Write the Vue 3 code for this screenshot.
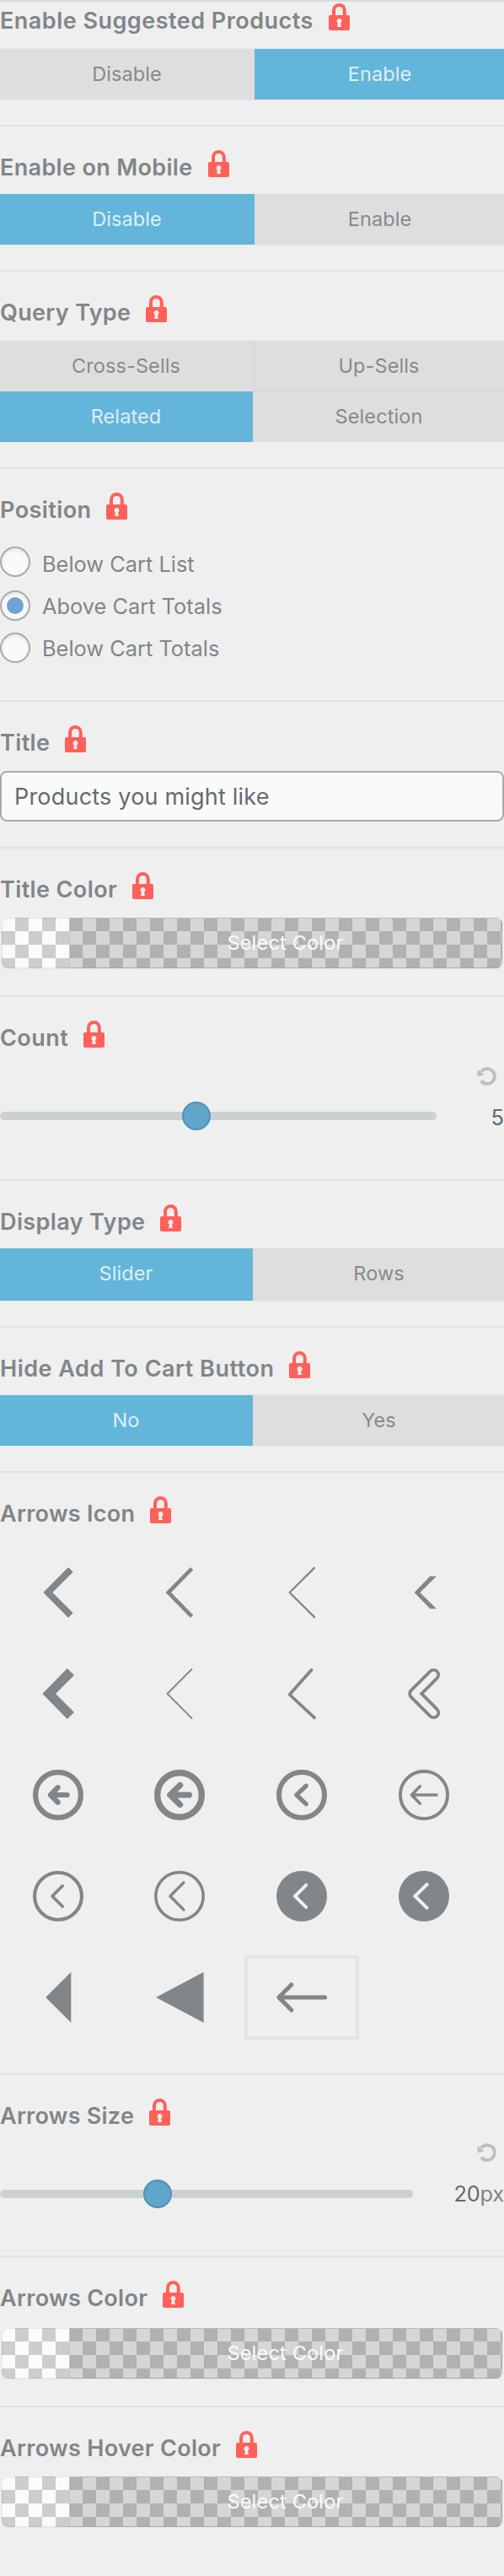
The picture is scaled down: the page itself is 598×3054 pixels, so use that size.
<script setup>
import { h } from 'vue'

const sections = [
  { title: 'Enable Suggested Products', track: 0.48, type: 'switch', cls: 'first', options: ['Disable', 'Enable'], active: 'Enable', cols: 'wide' },
  { title: 'Enable on Mobile', track: 0.34, type: 'switch', cls: '', options: ['Disable', 'Enable'], active: 'Disable', cols: 'wide' },
  { title: 'Query Type', track: 0.33, type: 'switch', cls: 'query', options: ['Cross-Sells', 'Up-Sells', 'Related', 'Selection'], active: 'Related', cols: 'even' },
  { title: 'Position', track: 0.42, type: 'radio', cls: 'position', options: ['Below Cart List', 'Above Cart Totals', 'Below Cart Totals'], active: 'Above Cart Totals' },
  { title: 'Title', track: 0.38, type: 'text', cls: 'input', value: 'Products you might like' },
  { title: 'Title Color', track: 0.38, type: 'color', cls: 'color' },
  { title: 'Count', track: 0.48, type: 'slider', cls: 'count', value: '5', unit: '', width: 518, pos: 216 },
  { title: 'Display Type', track: 0.38, type: 'switch', cls: 'display', options: ['Slider', 'Rows'], active: 'Slider', cols: 'even' },
  { title: 'Hide Add To Cart Button', track: 0.51, type: 'switch', cls: '', options: ['No', 'Yes'], active: 'No', cols: 'even' },
  { title: 'Arrows Icon', track: 0.28, type: 'icons', cls: 'icons' },
  { title: 'Arrows Size', track: 0.24, type: 'slider', cls: 'size', value: '20', unit: 'px', width: 490, pos: 170 },
  { title: 'Arrows Color', track: 0.3, type: 'color', cls: 'color lower' },
  { title: 'Arrows Hover Color', track: 0.31, type: 'color', cls: 'color' },
]

const INK = '#80868a'
const PAPER = '#efefef'
const fill = (points) => ({ tag: 'polygon', points, fill: INK })
const line = (d, w, cap = 'round', join = 'round', color = INK) => ({
  tag: 'path', d, fill: 'none', stroke: color, 'stroke-width': w, 'stroke-linecap': cap, 'stroke-linejoin': join,
})
const ring = (w) => ({ tag: 'circle', cx: 0, cy: 0, r: 30 - w / 2, fill: 'none', stroke: INK, 'stroke-width': w })
const disc = { tag: 'circle', cx: 0, cy: 0, r: 30, fill: INK }

const icons = [
  [{ ...fill('-16.2,0 12.1,-28.4 16.2,-24.3 -8.2,0 16.2,24.3 12.1,28.4'), stroke: INK, 'stroke-width': 2.2, 'stroke-linejoin': 'round' }],
  [{ ...fill('-15.5,0 13,-29 15.3,-26.8 -10.9,0 15.3,26.8 13,29'), stroke: INK, 'stroke-width': 1.4, 'stroke-linejoin': 'round' }],
  [line('M14.9-29.1-14.4 0 14.9 29.1', 2.3)],
  [fill('-11.4,0 7.2,-19.2 14.9,-19.2 -4.6,0 14.9,19.2 7.2,19.2')],
  [fill('-18.7,0 10.8,-30 19,-22 -3,0 19,22 10.8,30')],
  [line('M14.5-29-14.5 0 14.5 29', 1.8)],
  [line('M11.6-28.2-14.4 1 15 28.4', 3.7)],
  [line('M11.4-22.4-11 0 11.4 22.4', 15.4), line('M11.4-22.4-11 0 11.4 22.4', 7.8, 'round', 'round', PAPER)],
  [ring(6.2), line('M10.6 0H-8M-.4-8.7-9.1 0-.4 8.7', 6.2)],
  [ring(7.4), line('M11.4 0H-8M.6-11.5-11.2 0 .6 11.5', 7.2)],
  [ring(6), line('M5.3-10.8-6.2 0 5.3 10.8', 5.2)],
  [ring(3.9), line('M15 0H-14M-4.6-10.3-14.6 0-4.6 10.3', 3.4)],
  [ring(4.1), line('M5.2-12.2-7 0 5.2 12.2', 3.6)],
  [ring(3.6), line('M4.9-16.1-11.1 0 4.9 16.1', 3.4)],
  [disc, line('M5.2-13.2-8 0 5.2 13.2', 4, 'round', 'miter', PAPER)],
  [disc, line('M4.8-15.2-10.6 0 4.8 15.2', 4, 'butt', 'miter', PAPER)],
  [fill('-14.8,0 15.3,-30 15.3,30')],
  [fill('-28,0 28.6,-30 28.6,30')],
  [line('M27.6 0H-26M-12.2-15-27.2 0-12.2 15', 5)],
]

const ArrowIcon = (props) =>
  h('svg', { viewBox: '-31 -31 62 62', width: 62, height: 62 }, props.shapes.map(({ tag, ...attrs }) => h(tag, attrs)))
ArrowIcon.props = ['shapes']
</script>

<template>
  <main class="panel">
    <section v-for="s in sections" :key="s.title" class="section" :class="s.cls">
      <header class="heading">
        <span class="label" :style="{ letterSpacing: s.track + 'px' }">{{ s.title }}</span>
        <svg class="lock" width="25" height="32" viewBox="0 0 25 32">
          <path d="M6 15V8.6C6 4.6 8.5 2 12.4 2s6.4 2.6 6.4 6.6V15" fill="none" stroke="#ff6059" stroke-width="4" />
          <rect y="14" width="25" height="18" rx="2" fill="#ff6059" />
          <path d="M12.5 18a3 3 0 0 1 1.6 5.5l.8 4.6h-4.8l.8-4.6A3 3 0 0 1 12.5 18z" fill="#efefef" />
        </svg>
      </header>

      <div v-if="s.type === 'switch'" class="switch" :class="s.cols">
        <div v-for="o in s.options" :key="o" class="option" :class="{ on: o === s.active }">{{ o }}</div>
      </div>

      <div v-else-if="s.type === 'radio'" class="radios">
        <div v-for="o in s.options" :key="o" class="radio">
          <span class="dot" :class="{ checked: o === s.active }"></span>
          <span class="radio-label">{{ o }}</span>
        </div>
      </div>

      <div v-else-if="s.type === 'text'" class="textbox">{{ s.value }}</div>

      <div v-else-if="s.type === 'color'" class="picker">
        <span class="picker-text">Select Color</span>
      </div>

      <div v-else-if="s.type === 'slider'" class="slider">
        <svg class="reset" width="24" height="24" viewBox="0 0 24 24">
          <path d="M5 6.5A8.9 8.9 0 1 1 5 17.5" fill="none" stroke="#bebebe" stroke-width="3.8" />
          <path d="M.7 3.7v8.6l7.8-1.9z" fill="#bebebe" />
        </svg>
        <div class="slider-row">
          <div class="track" :style="{ width: s.width + 'px' }">
            <span class="thumb" :style="{ marginLeft: s.pos + 'px' }"></span>
          </div>
          <span class="value">{{ s.value }}<span class="unit">{{ s.unit }}</span></span>
        </div>
      </div>

      <div v-else class="grid">
        <div v-for="(shapes, i) in icons" :key="i" class="cell" :class="{ selected: i === icons.length - 1 }">
          <ArrowIcon :shapes="shapes" />
        </div>
      </div>
    </section>
  </main>
</template>

<style>
body {
  background: #efefef;
}
</style>

<style scoped>
.panel {
  width: 598px;
  height: 3054px;
  overflow: hidden;
  background: #efefef;
  color: #80868a;
  font-family: Inter, "Liberation Sans", sans-serif;
}
.section {
  box-sizing: border-box;
  border-top: 2px solid #e1e1e1;
  padding: 28px 0 30px;
}
.section.first {
  border-top-color: #dadada;
  padding-top: 2px;
}
.heading {
  display: flex;
  align-items: flex-start;
  gap: 18px;
  height: 32px;
  margin-bottom: 20px;
}
.first .heading,
.query .heading,
.input .heading {
  margin-bottom: 22px;
}
.label {
  font-size: 27px;
  font-weight: 600;
  line-height: 42px;
  white-space: nowrap;
}
.lock {
  flex: none;
}

.switch {
  display: grid;
  grid-template-columns: 300px 300px;
  grid-auto-rows: 60px;
  box-shadow: 0 0 0 1px #e8e8e8;
}
.switch.wide {
  grid-template-columns: 302px 298px;
}
.display .switch {
  grid-auto-rows: 62px;
}
.option {
  box-sizing: border-box;
  padding-right: 1px;
  background: #dedede;
  color: #868a91;
  font-size: 23.5px;
  line-height: 60px;
  letter-spacing: 0.1px;
  text-align: center;
}
.option.on {
  background: #64b5da;
  color: #deeff8;
}
.query .option:nth-child(2) {
  box-shadow: inset 2px -1px 0 #d9d9d9;
}
.query .option:nth-child(4) {
  box-shadow: inset 0 1px 0 #d9d9d9;
}

.position {
  padding-bottom: 44px;
}
.position .heading {
  margin-bottom: 32px;
}
.radio {
  display: flex;
  gap: 14px;
  height: 36px;
  margin-bottom: 14px;
}
.radio:first-child {
  margin-bottom: 16px;
}
.radio:last-child {
  margin-bottom: 0;
}
.dot {
  box-sizing: border-box;
  display: flex;
  align-items: center;
  justify-content: center;
  width: 36px;
  height: 36px;
  border: 2px solid #a8abae;
  border-radius: 50%;
  background: #fafafa;
  box-shadow: inset 0 2px 4px rgba(0, 0, 0, 0.08);
}
.dot.checked::after {
  content: "";
  width: 20px;
  height: 20px;
  border-radius: 50%;
  background: #70a3d3;
}
.radio-label {
  font-size: 25.4px;
  line-height: 38px;
}
.radio:first-child .radio-label {
  line-height: 42px;
}

.textbox {
  box-sizing: border-box;
  height: 60px;
  padding-left: 15px;
  border: 2px solid #a8abae;
  border-radius: 8px;
  background: #fafafa;
  color: #646b6e;
  font-size: 27px;
  line-height: 57px;
  letter-spacing: 0.2px;
}

.color {
  padding-bottom: 32px;
}
.color .heading {
  margin-bottom: 22px;
}
.color.lower .heading {
  margin-bottom: 24px;
}
.picker {
  box-sizing: border-box;
  display: flex;
  height: 60px;
  margin: 0 2px;
  padding-left: 80px;
  border-radius: 8px;
  overflow: hidden;
  background: conic-gradient(#cdcdcd 25%, #fbfbfb 0 50%, #cdcdcd 0 75%, #fbfbfb 0) 0 0 / 32px 32px;
  box-shadow: inset 0 0 0 1px rgba(0, 0, 0, 0.08), 0 1px 0 1px #ebebeb;
}
.picker-text {
  flex: 1;
  padding-right: 1px;
  background: conic-gradient(#d6d6d6 25%, #b1b1b1 0 50%, #d6d6d6 0 75%, #b1b1b1 0) 0 0 / 32px 32px;
  box-shadow: inset 0 1px 0 #b9b9b9, inset -1px -1px 0 #a9a9a9, inset 1px 0 0 #c5c5c5;
  color: #fbfbfb;
  font-size: 23.5px;
  line-height: 60px;
  letter-spacing: 0.2px;
  text-align: center;
}

.count .heading {
  margin-bottom: 22px;
}
.count {
  padding-bottom: 58px;
}
.size {
  padding-bottom: 56px;
}
.slider {
  display: flex;
  flex-direction: column;
}
.reset {
  align-self: flex-end;
  margin: 0 8px 18px 0;
}
.size .reset {
  margin-bottom: 20px;
}
.slider-row {
  display: flex;
  align-items: center;
  justify-content: space-between;
  height: 34px;
}
.track {
  display: flex;
  align-items: center;
  height: 10px;
  border-radius: 5px;
  background: #cbd1d3;
}
.thumb {
  box-sizing: border-box;
  flex: none;
  width: 34px;
  height: 34px;
  border: 2px solid #5290bb;
  border-radius: 50%;
  background: #60a5ca;
}
.value {
  height: 34px;
  color: #646b6e;
  font-size: 25.4px;
  line-height: 38px;
}
.size .value {
  line-height: 34px;
  letter-spacing: -0.2px;
}
.unit {
  color: #80868a;
}

.icons {
  padding-bottom: 40px;
}
.icons .heading {
  margin-bottom: 32px;
}
.grid {
  display: grid;
  grid-template-columns: repeat(4, 136px);
  grid-auto-rows: 100px;
  gap: 20px 8.8px;
  margin-left: 0.6px;
}
.cell {
  box-sizing: border-box;
  display: flex;
  align-items: center;
  justify-content: center;
  border: 4px solid transparent;
}
.cell.selected {
  border-color: #e3e3e3;
}
</style>
